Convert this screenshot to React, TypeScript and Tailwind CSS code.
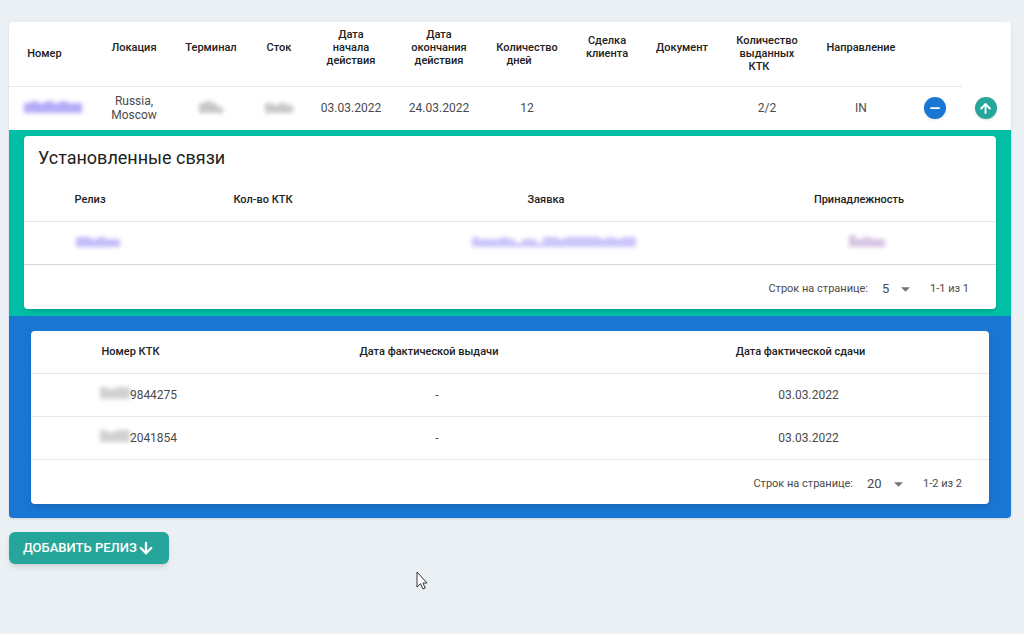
import type { ReactNode } from "react";
import { ArrowDown, ArrowUp, Minus } from "lucide-react";

const releaseColumns = [
  { label: "Номер", width: "w-[87px]" },
  { label: "Локация\n", width: "w-[76px]" },
  { label: "Терминал\n", width: "w-[78px]" },
  { label: "Сток\n", width: "w-[58px]" },
  { label: "Дата\nначала\nдействия\n", width: "w-[86px]" },
  { label: "Дата\nокончания\nдействия\n", width: "w-[90px]" },
  { label: "Количество\nдней", width: "w-[86px]" },
  { label: "Сделка\nклиента\n", width: "w-[74px]" },
  { label: "Документ\n", width: "w-[76px]" },
  { label: "Количество\nвыданных\nКТК", width: "w-[94px]" },
  { label: "Направление\n", width: "w-[94px]" },
];

const containers = [
  { id: 1, number: "9844275", issued: "-", returned: "03.03.2022" },
  { id: 2, number: "2041854", issued: "-", returned: "03.03.2022" },
];

// Header text with the room that the sort arrow takes after it
function SortLabel({ children }: { children: ReactNode }) {
  return (
    <span className="whitespace-pre-line">
      {children}
      <span className="inline-block h-2 w-4" />
    </span>
  );
}

// Hidden value: a row of soft bars in the current text colour
function Masked({ bars, className }: { bars: string[]; className: string }) {
  return (
    <span
      className={`mb-1 inline-flex h-3 items-end align-middle blur-[2px] ${className}`}
    >
      {bars.map((bar, i) => (
        <span key={i} className={`flex-1 bg-current ${bar}`} />
      ))}
    </span>
  );
}

function Pagination({
  id,
  size,
  range,
  selectWidth,
}: {
  id: string;
  size: string;
  range: string;
  selectWidth: string;
}) {
  return (
    <div className="flex items-center justify-end pt-4 pr-[27px] pb-3 text-[11px] leading-4 text-[#4a4a4a]">
      <label htmlFor={id}>Строк на странице:</label>
      <div className={`relative ml-3.5 ${selectWidth}`}>
        <select
          id={id}
          defaultValue={size}
          className="block w-full cursor-pointer appearance-none bg-transparent text-[13px] leading-4 outline-none"
        >
          <option value={size}>{size}</option>
        </select>
        <svg
          className="pointer-events-none absolute top-1.5 right-0 h-[5px] w-[9px] fill-[#757575]"
          viewBox="0 0 10 5"
        >
          <path d="M0 0h10L5 5z" />
        </svg>
      </div>
      <span className="ml-5">{range}</span>
    </div>
  );
}

export default function App() {
  return (
    <div className="min-h-screen bg-[#ebf0f5] pt-[22px] pr-[13px] pb-6 pl-[9px] font-[Roboto,sans-serif] text-[#212121]">
      {/* Releases */}
      <div className="overflow-hidden rounded bg-white shadow">
        <table className="w-full table-fixed border-collapse text-center text-xs">
          <colgroup>
            {releaseColumns.map((column) => (
              <col key={column.label} className={column.width} />
            ))}
            <col className="w-[54px]" />
            <col className="w-[49px]" />
          </colgroup>
          <thead>
            <tr className="h-16 text-[11px] leading-[13px]">
              {releaseColumns.map((column) => (
                <th
                  key={column.label}
                  className="border-b border-gray-200 p-0 font-medium"
                >
                  <SortLabel>{column.label}</SortLabel>
                </th>
              ))}
              <td className="border-b border-gray-200" />
              <td />
            </tr>
          </thead>
          <tbody>
            <tr className="h-11 text-[#4a4a4a]">
              <td>
                <a href="#release" aria-label="Релиз" className="text-[#6a5af0]">
                  <Masked
                    className="w-[58px] opacity-50"
                    bars={["h-2.5", "h-3", "h-2.5", "h-3", "h-2.5", "h-3", "h-2.5", "h-2.5"]}
                  />
                </a>
              </td>
              <td className="leading-[14px]">
                Russia,
                <br />
                Moscow
              </td>
              <td>
                <Masked
                  className="w-6 opacity-30"
                  bars={["h-2.5", "h-3", "h-2.5", "h-1.5"]}
                />
              </td>
              <td>
                <Masked
                  className="w-7 opacity-30"
                  bars={["h-2.5", "h-2", "h-2.5", "h-2"]}
                />
              </td>
              <td>03.03.2022</td>
              <td>24.03.2022</td>
              <td>12</td>
              <td />
              <td />
              <td>2/2</td>
              <td>IN</td>
              <td>
                <button
                  aria-label="Свернуть"
                  className="mx-auto flex size-[22px] items-center justify-center rounded-full bg-[#1976d2] text-white shadow"
                >
                  <Minus size={14} strokeWidth={3} />
                </button>
              </td>
              <td className="pr-0.5">
                <button
                  aria-label="Скрыть связи"
                  className="mx-auto flex size-[22px] items-center justify-center rounded-full bg-[#26a69a] text-white shadow"
                >
                  <ArrowUp size={15} strokeWidth={3} />
                </button>
              </td>
            </tr>
          </tbody>
        </table>

        {/* Links */}
        <div className="bg-[#00bfa5] px-[15px] pt-1.5 pb-[7px]">
          <div className="rounded bg-white shadow-md">
            <h2 className="px-3.5 pt-[7px] pb-[5px] text-lg leading-[30px]">
              Установленные связи
            </h2>
            <table className="w-full table-fixed border-collapse text-center text-xs">
              <colgroup>
                <col className="w-[148px]" />
                <col className="w-[198px]" />
                <col className="w-[368px]" />
                <col className="w-[258px]" />
              </colgroup>
              <thead>
                <tr className="h-[43px] border-b border-gray-200 text-[11px]">
                  {["Релиз", "Кол-во КТК", "Заявка", "Принадлежность"].map(
                    (label) => (
                      <th key={label} className="pt-0.5 font-medium">
                        <SortLabel>{label}</SortLabel>
                      </th>
                    ),
                  )}
                </tr>
              </thead>
              <tbody>
                <tr className="h-[43px] border-b border-gray-300">
                  <td>
                    <a href="#link" aria-label="Релиз" className="text-[#6a5af0]">
                      <Masked
                        className="w-11 opacity-40"
                        bars={["h-2.5", "h-2.5", "h-2", "h-2.5", "h-2", "h-2"]}
                      />
                    </a>
                  </td>
                  <td />
                  <td>
                    <a href="#request" aria-label="Заявка" className="text-[#6a5af0]">
                      <Masked
                        className="w-[164px] opacity-35"
                        bars={[
                          "h-2.5", "h-2", "h-2", "h-2", "h-2.5", "h-2", "h-1",
                          "h-2", "h-2", "h-1", "h-2.5", "h-2.5", "h-2",
                          "h-2.5", "h-2.5", "h-2.5", "h-2.5", "h-2.5", "h-2",
                          "h-2.5", "h-2", "h-2.5", "h-2.5",
                        ]}
                      />
                    </a>
                  </td>
                  <td>
                    <a href="#owner" aria-label="Принадлежность" className="text-[#7b3fa5]">
                      <Masked
                        className="w-9 opacity-30"
                        bars={["h-3", "h-2", "h-2.5", "h-2", "h-2"]}
                      />
                    </a>
                  </td>
                </tr>
              </tbody>
            </table>
            <Pagination id="links-size" size="5" range="1-1 из 1" selectWidth="w-7" />
          </div>
        </div>

        {/* Containers */}
        <div className="bg-[#1976d2] px-[22px] pt-[15px] pb-3.5">
          <div className="rounded bg-white shadow-md">
            <table className="w-full table-fixed border-collapse text-center text-xs">
              <colgroup>
                <col className="w-[215px]" />
                <col className="w-[382px]" />
                <col className="w-[361px]" />
              </colgroup>
              <thead>
                <tr className="h-[43px] border-b border-gray-200 text-[11px]">
                  {["Номер КТК", "Дата фактической выдачи", "Дата фактической сдачи"].map(
                    (label) => (
                      <th key={label} className="pt-0.5 font-medium">
                        <SortLabel>{label}</SortLabel>
                      </th>
                    ),
                  )}
                </tr>
              </thead>
              <tbody>
                {containers.map((container) => (
                  <tr
                    key={container.id}
                    className="h-[43px] border-b border-gray-200 text-[#4a4a4a]"
                  >
                    <td>
                      <Masked
                        className="w-[30px] opacity-25"
                        bars={["h-3", "h-2.5", "h-3", "h-3"]}
                      />
                      {container.number}
                    </td>
                    <td>{container.issued}</td>
                    <td>{container.returned}</td>
                  </tr>
                ))}
              </tbody>
            </table>
            <Pagination id="containers-size" size="20" range="1-2 из 2" selectWidth="w-9" />
          </div>
        </div>
      </div>

      <button className="mt-3.5 flex h-8 items-center rounded-md bg-[#26a69a] px-3.5 text-[13px] font-medium text-white shadow-md">
        ДОБАВИТЬ РЕЛИЗ
        <ArrowDown size={18} strokeWidth={3} />
      </button>

      {/* Mouse pointer */}
      <svg
        className="pointer-events-none absolute top-[571px] left-[416px] h-[19px] w-3"
        viewBox="0 0 12 19"
      >
        <path
          d="M1 1v15l3.5-3.3L7 18l2.3-1-2.4-5H11z"
          fill="#fff"
          stroke="#333"
          strokeWidth="1"
        />
      </svg>
    </div>
  );
}
